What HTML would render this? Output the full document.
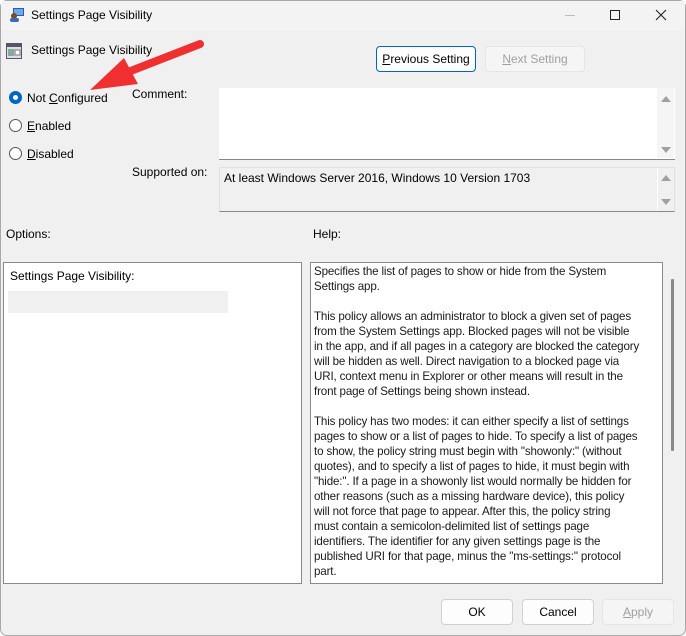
<!DOCTYPE html>
<html><head><meta charset="utf-8"><style>
*{margin:0;padding:0;box-sizing:border-box}
body{width:686px;height:636px;background:#fff;font-family:"Liberation Sans",sans-serif;font-size:12px;color:#000;position:relative;overflow:hidden}
.win{position:absolute;left:0;top:0;width:686px;height:636px;background:#f0f0f0;border-radius:7px;overflow:hidden;box-shadow:inset 0 0 0 1px #a8a8a8}
.t{position:absolute;white-space:nowrap}
.box{position:absolute;background:#fff;border:1px solid #8a8a8a}
.btn{position:absolute;background:#fdfdfd;border:1px solid #d0d0d0;border-radius:4px;text-align:center;line-height:24px;font-size:12px}
.radio{position:absolute;width:13px;height:13px;border:1px solid #555;border-radius:50%;background:#fff}
u{text-decoration:underline}
.help{position:absolute;left:314px;top:264px;line-height:15px;font-size:11.6px;color:#1a1a1a;white-space:pre;letter-spacing:-0.15px}
.arr{position:absolute}
</style></head><body>
<div class="win">
<div style="position:absolute;left:1px;top:1px;width:684px;height:29px;background:#f3f3f3"></div>
<svg style="position:absolute;left:9px;top:7px" width="16" height="16"><rect x="4" y="1" width="11" height="8" fill="#2a5aa8"/><rect x="5" y="2" width="9" height="6" fill="#6fa8e8"/><circle cx="5" cy="9" r="3" fill="#7a4a2a"/><rect x="1" y="11" width="9" height="4" rx="2" fill="#3a6ab8"/></svg>
<div class="t" style="left:31px;top:8px;font-size:12px">Settings Page Visibility</div>
<div style="position:absolute;left:565px;top:15px;width:10px;height:1px;background:#bbb"></div>
<div style="position:absolute;left:610px;top:10px;width:10px;height:10px;border:1px solid #222"></div>
<svg style="position:absolute;left:655px;top:9px" width="12" height="12"><path d="M1 1L11 11M11 1L1 11" stroke="#222" stroke-width="1.1"/></svg>

<svg style="position:absolute;left:6px;top:43px" width="16" height="16"><rect x="0.5" y="0.5" width="15" height="15" fill="#dde" stroke="#556"/><rect x="1" y="1" width="14" height="3" fill="#556"/><rect x="2" y="6" width="6" height="7" fill="#8a9"/><rect x="9" y="7" width="5" height="5" fill="#fff" stroke="#777"/></svg>
<div class="t" style="left:31px;top:43px">Settings Page Visibility</div>

<div class="btn" style="left:376px;top:46px;width:100px;height:26px;border:1px solid #0067c0;background:#fdfdfd"><u>P</u>revious Setting</div>
<div class="btn" style="left:485px;top:46px;width:100px;height:26px;background:#f5f5f5;border-color:#e5e5e5;color:#a0a0a0"><u>N</u>ext Setting</div>

<div class="radio" style="left:9px;top:91px;border:4px solid #0067c0;background:#fff"></div>
<div class="t" style="left:27px;top:91px">Not <u>C</u>onfigured</div>
<div class="radio" style="left:9px;top:119px"></div>
<div class="t" style="left:27px;top:119px"><u>E</u>nabled</div>
<div class="radio" style="left:9px;top:147px"></div>
<div class="t" style="left:27px;top:147px"><u>D</u>isabled</div>

<div class="t" style="left:132px;top:87px">Comment:</div>
<div class="box" style="left:219px;top:88px;width:456px;height:72px;border:none;border-bottom:1px solid #888"></div>
<div style="position:absolute;left:657px;top:88px;width:17px;height:70px;background:#f5f5f5"></div>
<svg class="arr" style="left:661px;top:95px" width="10" height="8"><path d="M0 7L5 1L10 7Z" fill="#a0a0a0"/></svg>
<svg class="arr" style="left:661px;top:146px" width="10" height="8"><path d="M0 1L5 7L10 1Z" fill="#a0a0a0"/></svg>

<div class="t" style="left:132px;top:165px">Supported on:</div>
<div style="position:absolute;left:219px;top:167px;width:456px;height:45px;background:#f0f0f0;border:1px solid #e0e0e0;border-bottom:1px solid #888"></div>
<div class="t" style="left:224px;top:171px">At least Windows Server 2016, Windows 10 Version 1703</div>
<div style="position:absolute;left:657px;top:168px;width:1px;height:43px;background:#fff"></div>
<svg class="arr" style="left:661px;top:174px" width="10" height="8"><path d="M0 7L5 1L10 7Z" fill="#a0a0a0"/></svg>
<svg class="arr" style="left:661px;top:198px" width="10" height="8"><path d="M0 1L5 7L10 1Z" fill="#a0a0a0"/></svg>

<div class="t" style="left:6px;top:227px">Options:</div>
<div class="t" style="left:313px;top:227px">Help:</div>

<div class="box" style="left:3px;top:262px;width:299px;height:322px"></div>
<div class="t" style="left:10px;top:269px">Settings Page Visibility:</div>
<div style="position:absolute;left:8px;top:291px;width:220px;height:22px;background:#f0f0f0"></div>

<div class="box" style="left:310px;top:262px;width:353px;height:322px"></div>
<div style="position:absolute;left:671px;top:279px;width:3px;height:172px;background:#8a8a8a;border-radius:1px"></div>
<div class="help">Specifies the list of pages to show or hide from the System
Settings app.

This policy allows an administrator to block a given set of pages
from the System Settings app. Blocked pages will not be visible
in the app, and if all pages in a category are blocked the category
will be hidden as well. Direct navigation to a blocked page via
URI, context menu in Explorer or other means will result in the
front page of Settings being shown instead.

This policy has two modes: it can either specify a list of settings
pages to show or a list of pages to hide. To specify a list of pages
to show, the policy string must begin with "showonly:" (without
quotes), and to specify a list of pages to hide, it must begin with
"hide:". If a page in a showonly list would normally be hidden for
other reasons (such as a missing hardware device), this policy
will not force that page to appear. After this, the policy string
must contain a semicolon-delimited list of settings page
identifiers. The identifier for any given settings page is the
published URI for that page, minus the "ms-settings:" protocol
part.</div>

<div class="btn" style="left:441px;top:599px;width:72px;height:26px">OK</div>
<div class="btn" style="left:522px;top:599px;width:72px;height:26px">Cancel</div>
<div class="btn" style="left:602px;top:599px;width:72px;height:26px;background:#f5f5f5;border-color:#e5e5e5;color:#a0a0a0"><u>A</u>pply</div>

<svg style="position:absolute;left:0;top:0" width="686" height="636"><path d="M200 44 L128 72" stroke="#f03030" stroke-width="8" stroke-linecap="round"/><polygon points="90,90 124,58 138,84" fill="#f03030"/></svg>
</div>
</body></html>
